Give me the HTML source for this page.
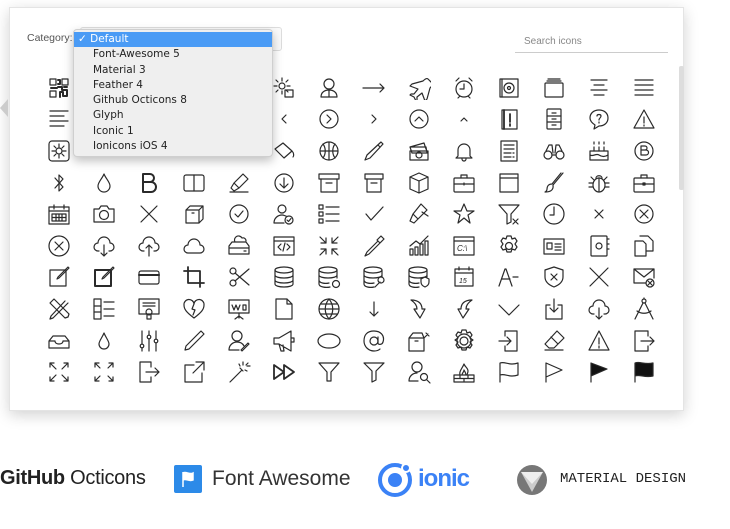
<!DOCTYPE html>
<html><head><meta charset="utf-8"><style>
*{margin:0;padding:0;box-sizing:border-box}
body{width:730px;height:529px;background:#fff;position:relative;overflow:hidden;font-family:"Liberation Sans",sans-serif}
.card{position:absolute;left:9px;top:7px;width:675px;height:404px;background:#fff;border:1px solid #e4e4e4;box-shadow:0 4px 14px rgba(0,0,0,.18)}
.arrow{position:absolute;left:0;top:99px;width:0;height:0;border-top:9px solid transparent;border-bottom:9px solid transparent;border-right:8px solid #ccc}
.cat{position:absolute;left:27px;top:32px;font-size:10.5px;color:#555}
.sel{position:absolute;left:80px;top:27px;width:202px;height:24px;border:1px solid #ddd;border-radius:3px;background:#fafafa}
.search{position:absolute;left:515px;top:36px;width:153px;height:17px;border-bottom:1px solid #ccc;font-size:10px;color:#888;padding-left:9px}
.scroll{position:absolute;left:679px;top:66px;width:5px;height:124px;background:#ddd;border-radius:2px}
.grid{position:absolute;left:36px;top:72px;display:grid;grid-template-columns:repeat(14,45px);grid-template-rows:repeat(10,31.6px)}
.grid i{display:flex;align-items:center;justify-content:center}
.grid svg{width:24px;height:24px;fill:none;stroke:#2a2a2a;stroke-width:1.2;stroke-linecap:round;stroke-linejoin:round}
.dd{position:absolute;left:73px;top:29px;width:200px;height:128px;background:#efefef;border:1px solid #cfcfcf;border-radius:4px;box-shadow:0 4px 10px rgba(0,0,0,.25);font-family:"DejaVu Sans","Liberation Sans",sans-serif;font-size:10.5px;color:#222;padding-top:2px}
.dd div{height:15.3px;line-height:15.3px;padding-left:19px}
.dd .on{background:#4a9bf5;color:#fff;padding-left:4px}
.logos{position:absolute;top:462px;left:0;width:730px;height:36px}
</style></head><body>
<div class="card"></div>
<div class="arrow"></div>
<div class="cat">Category:</div>
<div class="sel"></div>
<div class="search">Search icons</div>
<div class="scroll"></div>
<div class="grid">
<!-- row1 -->
<i><svg viewBox="0 0 24 24"><rect x="3" y="3" width="6" height="6"/><rect x="15" y="3" width="6" height="6"/><rect x="3" y="15" width="6" height="6"/><path d="M11 4h2v4h-2M11 11h4v3h5v6h-4v-4h-3v5M10 12h-6M17 11h3" stroke-width="2"/></svg></i>
<i><svg viewBox="0 0 24 24"><circle cx="12" cy="12" r="8"/></svg></i>
<i><svg viewBox="0 0 24 24"><rect x="4" y="4" width="16" height="16"/></svg></i>
<i><svg viewBox="0 0 24 24"><circle cx="12" cy="12" r="8"/></svg></i>
<i><svg viewBox="0 0 24 24"><rect x="4" y="4" width="16" height="16"/></svg></i>
<i><svg viewBox="0 0 24 24"><circle cx="10" cy="10" r="3"/><path d="M10 2v3M10 15v3M2 10h3M15 10h3M4 4l2 2M14 14l2 2M4 16l2-2M14 6l2-2"/><rect x="13" y="14" width="8" height="7"/></svg></i>
<i><svg viewBox="0 0 24 24"><circle cx="12" cy="8" r="5"/><path d="M4 21c0-5 4-7 8-7s8 2 8 7zM12 14v7"/></svg></i>
<i><svg viewBox="0 0 24 24"><path d="M1 12h21M18 8l4 4-4 4"/></svg></i>
<i><svg viewBox="0 0 24 24"><path d="M21 3c-1-1-3 0-5 2L5 8 3 10l8 3-4 5H4l-1 1 4 2 2 4 1-1v-3l5-4 3 8 2-2 3-11c2-2 3-4 2-5z"/></svg></i>
<i><svg viewBox="0 0 24 24"><circle cx="12" cy="13" r="8"/><path d="M12 8v5h-4M4 5l3-3M20 5l-3-3M6 22l2-2M18 22l-2-2"/></svg></i>
<i><svg viewBox="0 0 24 24"><rect x="3" y="3" width="18" height="18"/><circle cx="12" cy="12" r="5"/><circle cx="12" cy="12" r="1.5"/><path d="M5 3v18"/></svg></i>
<i><svg viewBox="0 0 24 24"><rect x="3" y="7" width="18" height="14" rx="1"/><path d="M5 5h14M6 3h12"/></svg></i>
<i><svg viewBox="0 0 24 24"><path d="M4 4h16M7 9h10M4 14h16M7 19h10"/></svg></i>
<i><svg viewBox="0 0 24 24"><path d="M3 4h18M3 9h18M3 14h18M3 19h18"/></svg></i>
<!-- row2 -->
<i><svg viewBox="0 0 24 24"><path d="M3 4h18M3 9h14M3 14h18M3 19h14"/></svg></i>
<i></i><i></i><i></i><i></i>
<i><svg viewBox="0 0 24 24"><path d="M14 8l-4 4 4 4"/></svg></i>
<i><svg viewBox="0 0 24 24"><circle cx="12" cy="12" r="9"/><path d="M10 8l4 4-4 4"/></svg></i>
<i><svg viewBox="0 0 24 24"><path d="M10 8l4 4-4 4"/></svg></i>
<i><svg viewBox="0 0 24 24"><circle cx="12" cy="12" r="9"/><path d="M8 14l4-4 4 4"/></svg></i>
<i><svg viewBox="0 0 24 24"><path d="M9 14l3-3 3 3"/></svg></i>
<i><svg viewBox="0 0 24 24"><rect x="5" y="3" width="15" height="19"/><path d="M7 3v19M13 7v8M13 17v2" stroke-width="1.8"/></svg></i>
<i><svg viewBox="0 0 24 24"><rect x="5" y="2" width="14" height="20" rx="1"/><path d="M5 9h14M5 15h14M10 6h4M10 12h4M10 18h4"/></svg></i>
<i><svg viewBox="0 0 24 24"><path d="M12 3c5 0 9 3 9 8s-4 8-9 8l-5 3 1-4c-3-2-5-4-5-7 0-5 4-8 9-8z"/><path d="M10 9c0-2 4-2 4 0s-2 2-2 4M12 15v1"/></svg></i>
<i><svg viewBox="0 0 24 24"><path d="M12 3l10 18H2zM12 10v6M12 18v1"/></svg></i>
<!-- row3 -->
<i><svg viewBox="0 0 24 24"><rect x="2" y="2" width="20" height="20" rx="3"/><circle cx="12" cy="12" r="3"/><path d="M12 5v3M12 16v3M5 12h3M16 12h3M7 7l2 2M15 15l2 2M7 17l2-2M15 9l2-2"/></svg></i>
<i></i><i></i><i></i><i></i>
<i><svg viewBox="0 0 24 24"><path d="M3 10l8-6 9 8-8 7zM20 12c2 2 2 5 1 6"/></svg></i>
<i><svg viewBox="0 0 24 24"><circle cx="12" cy="12" r="9"/><path d="M3 12h18M12 3v18M6 5c3 4 3 10 0 14M18 5c-3 4-3 10 0 14"/></svg></i>
<i><svg viewBox="0 0 24 24"><path d="M19 3l2 2L8 19l-5 2 2-5zM16 6l2 2"/></svg></i>
<i><svg viewBox="0 0 24 24"><path d="M3 8l14-4 2 6M3 8l2 6h15l-1-6zM3 12h18v9H3z"/><circle cx="12" cy="16" r="3"/></svg></i>
<i><svg viewBox="0 0 24 24"><path d="M6 17V11a6 6 0 0112 0v6l2 2H4zM10 20a2 2 0 004 0"/></svg></i>
<i><svg viewBox="0 0 24 24"><rect x="4" y="2" width="16" height="20"/><path d="M7 6h10M7 10h10M7 14h7M7 18h7M16 14h1M16 18h1"/></svg></i>
<i><svg viewBox="0 0 24 24"><circle cx="6" cy="16" r="4"/><circle cx="18" cy="16" r="4"/><path d="M4 12l3-6h3l1 8M20 12l-3-6h-3l-1 8M10 16h4"/></svg></i>
<i><svg viewBox="0 0 24 24"><rect x="3" y="12" width="18" height="9"/><path d="M3 16c3 2 6-2 9 0s6 2 9 0M7 8v4M12 8v4M17 8v4M7 3v2M12 3v2M17 3v2"/></svg></i>
<i><svg viewBox="0 0 24 24"><circle cx="12" cy="12" r="9"/><path d="M9 7h4a2 2 0 010 4H9zM9 11h5a2 2 0 010 5H9z"/></svg></i>
<!-- row4 -->
<i><svg viewBox="0 0 24 24"><path d="M8 7l8 9-4 4V4l4 4-8 9"/></svg></i>
<i><svg viewBox="0 0 24 24"><path d="M12 3c-2 5-6 8-6 12a6 6 0 0012 0c0-4-4-7-6-12z"/></svg></i>
<i><svg viewBox="0 0 24 24"><path d="M6 3h7a4 4 0 010 8H6zM6 11h8a5 5 0 010 10H6zM6 3v18" stroke-width="2"/></svg></i>
<i><svg viewBox="0 0 24 24"><rect x="2" y="4" width="20" height="16" rx="2"/><path d="M12 4v16"/></svg></i>
<i><svg viewBox="0 0 24 24"><path d="M16 3l5 5-9 9-5-5zM7 12l-3 5 3 3 5-3M3 21h18"/></svg></i>
<i><svg viewBox="0 0 24 24"><circle cx="12" cy="12" r="9"/><path d="M12 7v10M8 13l4 4 4-4"/></svg></i>
<i><svg viewBox="0 0 24 24"><rect x="2" y="3" width="20" height="5"/><path d="M4 8v13h16V8M9 12h6"/></svg></i>
<i><svg viewBox="0 0 24 24"><rect x="3" y="3" width="18" height="5"/><path d="M5 8v13h14V8M9 12h6"/></svg></i>
<i><svg viewBox="0 0 24 24"><path d="M12 2l9 4v12l-9 4-9-4V6zM3 6l9 4 9-4M12 10v12"/></svg></i>
<i><svg viewBox="0 0 24 24"><rect x="2" y="7" width="20" height="14" rx="1"/><path d="M9 7V4h6v3M2 13h20M12 12v2"/></svg></i>
<i><svg viewBox="0 0 24 24"><rect x="3" y="3" width="18" height="18"/><path d="M3 7h18"/></svg></i>
<i><svg viewBox="0 0 24 24"><path d="M21 2L11 14M19 2l-9 11M10 13c-4 0-5 3-5 5s-2 3-2 3c4 0 9-1 8-7"/></svg></i>
<i><svg viewBox="0 0 24 24"><ellipse cx="12" cy="14" rx="6" ry="7"/><path d="M12 7v14M6 12H2M6 16H2M18 12h4M18 16h4M7 9L4 6M17 9l3-3M9 7c0-3 6-3 6 0"/></svg></i>
<i><svg viewBox="0 0 24 24"><rect x="2" y="7" width="20" height="14" rx="1"/><path d="M9 7V4h6v3M2 13h20M11 12h2v2h-2z"/></svg></i>
<!-- row5 -->
<i><svg viewBox="0 0 24 24"><rect x="2" y="5" width="20" height="17"/><path d="M2 9h20M7 3v4M17 3v4M5 12h14v7H5zM5 15.5h14M9 12v7M12 12v7M15 12v7"/></svg></i>
<i><svg viewBox="0 0 24 24"><path d="M2 7h5l2-3h6l2 3h5v13H2z"/><circle cx="12" cy="13" r="4.5"/></svg></i>
<i><svg viewBox="0 0 24 24"><path d="M4 4l16 16M20 4L4 20"/></svg></i>
<i><svg viewBox="0 0 24 24"><path d="M4 8h13v13H4zM4 8l4-4h13l-4 4M21 4v13l-4 4M10 11h2"/></svg></i>
<i><svg viewBox="0 0 24 24"><circle cx="12" cy="12" r="9"/><path d="M8 12l3 3 5-6"/></svg></i>
<i><svg viewBox="0 0 24 24"><circle cx="10" cy="7" r="4"/><path d="M2 21c0-5 4-8 8-8 2 0 3 1 4 1M2 21h10"/><circle cx="17" cy="18" r="4"/><path d="M15 18l1.5 1.5 2.5-3"/></svg></i>
<i><svg viewBox="0 0 24 24"><rect x="2" y="3" width="4" height="4"/><rect x="2" y="10" width="4" height="4"/><rect x="2" y="17" width="4" height="4"/><path d="M9 5h13M9 12h13M9 19h13"/></svg></i>
<i><svg viewBox="0 0 24 24"><path d="M4 12l5 6L21 5"/></svg></i>
<i><svg viewBox="0 0 24 24"><path d="M14 2l6 6-9 9-5-5zM6 12l-3 7 4 2 4-4M15 10l6 4"/></svg></i>
<i><svg viewBox="0 0 24 24"><path d="M12 2l3 7h7l-6 4 2 8-6-5-6 5 2-8-6-4h7z"/></svg></i>
<i><svg viewBox="0 0 24 24"><path d="M2 3h20l-8 9v8l-4 2V12zM16 17l5 5M21 17l-5 5"/></svg></i>
<i><svg viewBox="0 0 24 24"><circle cx="12" cy="12" r="10"/><path d="M12 5v8h-4"/></svg></i>
<i><svg viewBox="0 0 24 24"><path d="M8 8l8 8M16 8l-8 8"/></svg></i>
<i><svg viewBox="0 0 24 24"><circle cx="12" cy="12" r="9"/><path d="M8 8l8 8M16 8l-8 8"/></svg></i>
<!-- row6 -->
<i><svg viewBox="0 0 24 24"><circle cx="12" cy="12" r="10"/><path d="M8 8l8 8M16 8l-8 8"/></svg></i>
<i><svg viewBox="0 0 24 24"><path d="M7 17H6a4 4 0 010-8 6 6 0 0112 0 4 4 0 010 8h-1M12 11v11M9 19l3 3 3-3"/></svg></i>
<i><svg viewBox="0 0 24 24"><path d="M7 17H6a4 4 0 010-8 6 6 0 0112 0 4 4 0 010 8h-1M12 22V11M9 14l3-3 3 3"/></svg></i>
<i><svg viewBox="0 0 24 24"><path d="M7 19H6a4 4 0 010-8 6 6 0 0112 0 4 4 0 010 8z"/></svg></i>
<i><svg viewBox="0 0 24 24"><path d="M2 12l3-4h14l3 4v8H2zM2 14h20M17 17h2M8 8a4 4 0 017-4 3 3 0 014 3"/></svg></i>
<i><svg viewBox="0 0 24 24"><rect x="2" y="3" width="20" height="18"/><path d="M2 7h20M9 10l-3 3 3 3M15 10l3 3-3 3M13 9l-2 8"/></svg></i>
<i><svg viewBox="0 0 24 24"><path d="M3 3l6 6M9 4v5H4M21 3l-6 6M15 4v5h5M3 21l6-6M9 20v-5H4M21 21l-6-6M15 20v-5h5"/></svg></i>
<i><svg viewBox="0 0 24 24"><path d="M19 2l3 3-4 4-3-3zM16 7L5 18l-2 4 4-2L18 9"/></svg></i>
<i><svg viewBox="0 0 24 24"><path d="M3 21h3v-6H3zM8 21h3v-8H8zM13 21h3V10h-3zM18 21h3V7h-3zM3 12l6-5 4 3 8-8"/></svg></i>
<i><svg viewBox="0 0 24 24"><rect x="2" y="3" width="20" height="18"/><path d="M2 7h20"/><text x="5" y="17" font-size="8" fill="#222" stroke="none" font-family="Liberation Sans">C:\</text></svg></i>
<i><svg viewBox="0 0 24 24"><circle cx="12" cy="12" r="3.5"/><path d="M10 2h4l1 3 3-1 2 3-2 3 2 3-2 3-3-1-1 3h-4l-1-3-3 1-2-3 2-3-2-3 2-3 3 1z"/></svg></i>
<i><svg viewBox="0 0 24 24"><rect x="2" y="5" width="20" height="15"/><rect x="5" y="9" width="5" height="6"/><path d="M13 10h6M13 13h6M13 16h6"/></svg></i>
<i><svg viewBox="0 0 24 24"><rect x="4" y="2" width="16" height="20" rx="1"/><path d="M20 5h2M20 10h2M20 15h2"/><circle cx="12" cy="12" r="3"/></svg></i>
<i><svg viewBox="0 0 24 24"><path d="M3 7h8l3 3v12H3zM8 2h8l5 5v10h-7"/></svg></i>
<!-- row7 -->
<i><svg viewBox="0 0 24 24"><rect x="3" y="5" width="16" height="16"/><path d="M21 2l1 1-10 10-2 1 1-2z"/></svg></i>
<i><svg viewBox="0 0 24 24"><rect x="3" y="5" width="16" height="16" stroke-width="2"/><path d="M21 2l1 1-10 10-2 1 1-2z"/></svg></i>
<i><svg viewBox="0 0 24 24"><rect x="2" y="6" width="20" height="13" rx="2"/><path d="M2 10h20" stroke-width="2"/></svg></i>
<i><svg viewBox="0 0 24 24"><path d="M6 2v16h16M2 6h16v16M6 6h12v12" stroke-width="1.8"/></svg></i>
<i><svg viewBox="0 0 24 24"><circle cx="6" cy="6" r="3"/><circle cx="6" cy="18" r="3"/><path d="M8 8l14 12M8 16L22 4"/></svg></i>
<i><svg viewBox="0 0 24 24"><ellipse cx="12" cy="5" rx="9" ry="3"/><path d="M3 5v14c0 4 18 4 18 0V5M3 10c0 4 18 4 18 0M3 15c0 4 18 4 18 0"/></svg></i>
<i><svg viewBox="0 0 24 24"><ellipse cx="11" cy="5" rx="9" ry="3"/><path d="M2 5v14c0 3 7 4 11 3M20 5v8M2 10c0 4 18 4 18 0M2 15c0 3 6 4 10 3"/><circle cx="19" cy="19" r="3.5"/></svg></i>
<i><svg viewBox="0 0 24 24"><ellipse cx="11" cy="5" rx="9" ry="3"/><path d="M2 5v14c0 3 6 4 10 3M20 5v7M2 10c0 4 18 4 18 0M2 15c0 3 6 4 10 3M13 22l5-5"/><circle cx="19" cy="15" r="3"/></svg></i>
<i><svg viewBox="0 0 24 24"><ellipse cx="11" cy="5" rx="9" ry="3"/><path d="M2 5v14c0 3 6 4 10 3M20 5v7M2 10c0 4 18 4 18 0M2 15c0 3 6 4 10 3M14 14l4-2 4 2v3c0 3-2 4-4 5-2-1-4-2-4-5z"/></svg></i>
<i><svg viewBox="0 0 24 24"><rect x="3" y="4" width="18" height="17"/><path d="M3 8h18M7 2v3M17 2v3"/><text x="7" y="18" font-size="7" fill="#222" stroke="none">15</text></svg></i>
<i><svg viewBox="0 0 24 24"><path d="M2 21l6-17h1l6 17M5 14h8M16 12h5"/></svg></i>
<i><svg viewBox="0 0 24 24"><path d="M12 2l9 3v7c0 5-4 8-9 10-5-2-9-5-9-10V5zM9 9l6 6M15 9l-6 6"/></svg></i>
<i><svg viewBox="0 0 24 24"><path d="M3 3l18 18M21 3L3 21"/></svg></i>
<i><svg viewBox="0 0 24 24"><path d="M14 18H2V4h20v9M2 4l10 8 10-8"/><circle cx="18" cy="18" r="4"/><path d="M16 16l4 4M20 16l-4 4"/></svg></i>
<!-- row8 -->
<i><svg viewBox="0 0 24 24"><path d="M3 6l15 15 3-1 1-3L7 2zM21 6L6 21l-3 1 1-3L18 4"/></svg></i>
<i><svg viewBox="0 0 24 24"><rect x="2" y="2" width="7" height="20"/><path d="M2 9h7M2 15h7M12 5h10M12 12h10M12 19h10"/></svg></i>
<i><svg viewBox="0 0 24 24"><rect x="2" y="2" width="20" height="15"/><path d="M6 6h12M6 9h12"/><circle cx="12" cy="15" r="3"/><path d="M10 17v5h4v-5"/></svg></i>
<i><svg viewBox="0 0 24 24"><path d="M12 21C4 15 2 12 2 8a5 5 0 0110-1 5 5 0 0110 1c0 4-2 7-10 13zM12 7l-2 5 3 1-2 5"/></svg></i>
<i><svg viewBox="0 0 24 24"><rect x="2" y="3" width="20" height="13"/><path d="M12 16v5M8 22l4-3 4 3M5 8l2 5 2-5 2 5 2-5M16 8h3v5h-3z"/></svg></i>
<i><svg viewBox="0 0 24 24"><path d="M4 2h11l5 5v15H4zM15 2v5h5"/></svg></i>
<i><svg viewBox="0 0 24 24"><circle cx="12" cy="12" r="10"/><path d="M2 12h20M12 2c-5 6-5 14 0 20M12 2c5 6 5 14 0 20M4 7h16M4 17h16"/></svg></i>
<i><svg viewBox="0 0 24 24"><path d="M12 5v14M8 15l4 4 4-4"/></svg></i>
<i><svg viewBox="0 0 24 24"><path d="M4 3c8 0 11 4 11 9h3l-5 9-6-9h3c0-4-3-7-6-9z"/></svg></i>
<i><svg viewBox="0 0 24 24"><path d="M20 3c-8 0-11 4-11 9H6l5 9 6-9h-3c0-4 3-7 6-9z"/></svg></i>
<i><svg viewBox="0 0 24 24"><path d="M2 8l10 10L22 8"/></svg></i>
<i><svg viewBox="0 0 24 24"><path d="M8 8H4v14h16V8h-4M12 2v13M8 11l4 4 4-4"/></svg></i>
<i><svg viewBox="0 0 24 24"><path d="M7 17H6a4 4 0 010-8 6 6 0 0112 0 4 4 0 010 8h-1M12 11v11M9 19l3 3 3-3"/></svg></i>
<i><svg viewBox="0 0 24 24"><circle cx="12" cy="4" r="2"/><path d="M11 6L3 22M13 6l8 16M5 14c4 3 10 3 14 0M12 1v1"/></svg></i>
<!-- row9 -->
<i><svg viewBox="0 0 24 24"><path d="M2 12l4-5h12l4 5v7H2zM2 12h6c0 2 2 3 4 3s4-1 4-3h6"/></svg></i>
<i><svg viewBox="0 0 24 24"><path d="M12 4c-2 5-5 8-5 11a5 5 0 0010 0c0-3-3-6-5-11z"/></svg></i>
<i><svg viewBox="0 0 24 24"><path d="M5 2v20M12 2v20M19 2v20"/><circle cx="5" cy="17" r="1.8" fill="#fff"/><circle cx="12" cy="8" r="1.8" fill="#fff"/><circle cx="19" cy="12" r="1.8" fill="#fff"/></svg></i>
<i><svg viewBox="0 0 24 24"><path d="M19 2l3 3L7 20l-4 1 1-4z"/></svg></i>
<i><svg viewBox="0 0 24 24"><circle cx="10" cy="7" r="5"/><path d="M2 21c0-5 4-8 8-8s6 2 7 4M2 21h10M14 21l7-7 1 1-7 7z"/></svg></i>
<i><svg viewBox="0 0 24 24"><path d="M2 9h5l12-7v20L7 15H2zM7 15l2 7h3l-1-6M19 9h3v4h-3"/></svg></i>
<i><svg viewBox="0 0 24 24"><ellipse cx="12" cy="12" rx="11" ry="7"/></svg></i>
<i><svg viewBox="0 0 24 24"><circle cx="12" cy="12" r="4"/><path d="M16 8v6c0 2 4 2 5-1 2-6-2-11-9-11S2 6 2 12s5 10 10 10c3 0 5-1 6-2"/></svg></i>
<i><svg viewBox="0 0 24 24"><path d="M2 9h15v13H2zM2 9l4-5h9l2 5M17 9l4-4M19 4l3 3M8 12h3"/></svg></i>
<i><svg viewBox="0 0 24 24"><circle cx="12" cy="12" r="4"/><circle cx="12" cy="12" r="7"/><path d="M10 1h4l1 3 3-1 2 3-2 3 3 2-3 2 2 3-2 3-3-1-1 3h-4l-1-3-3 1-2-3 2-3-3-2 3-2-2-3 2-3 3 1z"/></svg></i>
<i><svg viewBox="0 0 24 24"><path d="M8 7V2h12v20H8v-5M2 12h12M10 8l4 4-4 4"/></svg></i>
<i><svg viewBox="0 0 24 24"><path d="M15 2l7 7-10 10H7l-4-4zM9 8l7 7M3 21h18"/></svg></i>
<i><svg viewBox="0 0 24 24"><path d="M12 2l10 19H2zM12 9v6M12 17v2"/></svg></i>
<i><svg viewBox="0 0 24 24"><path d="M16 7V2H3v20h13v-5M9 12h13M18 8l4 4-4 4"/></svg></i>
<!-- row10 -->
<i><svg viewBox="0 0 24 24"><path d="M3 3l6 6M3 3h4M3 3v4M21 3l-6 6M21 3h-4M21 3v4M3 21l6-6M3 21h4M3 21v-4M21 21l-6-6M21 21h-4M21 21v-4"/></svg></i>
<i><svg viewBox="0 0 24 24"><path d="M3 3l5 5M3 3h4M3 3v4M21 3l-5 5M21 3h-4M21 3v4M3 21l5-5M3 21h4M3 21v-4M21 21l-5-5M21 21h-4M21 21v-4"/></svg></i>
<i><svg viewBox="0 0 24 24"><path d="M14 7V2H3v20h11v-5M9 12h13M18 8l4 4-4 4"/></svg></i>
<i><svg viewBox="0 0 24 24"><path d="M12 5H3v17h17v-9M14 2h8v8M22 2L11 13"/></svg></i>
<i><svg viewBox="0 0 24 24"><path d="M3 22L15 10M13 8l3 3M16 2v3M20 6h3M21 3l-2 2M12 4l1 2M18 10l2 1"/></svg></i>
<i><svg viewBox="0 0 24 24"><path d="M2 5l10 7-10 7zM12 5l10 7-10 7z" stroke-width="1.8"/></svg></i>
<i><svg viewBox="0 0 24 24"><path d="M2 3h20l-8 9v9h-4v-9z"/></svg></i>
<i><svg viewBox="0 0 24 24"><path d="M2 3h20l-8 8v9l-4 2V11z"/></svg></i>
<i><svg viewBox="0 0 24 24"><circle cx="10" cy="7" r="5"/><path d="M2 21c0-5 4-8 8-8M2 21h9"/><circle cx="17" cy="17" r="3.5"/><path d="M20 20l3 3"/></svg></i>
<i><svg viewBox="0 0 24 24"><path d="M2 15h20v7H2zM2 18.5h20M8 15v3.5M16 15v3.5M12 18.5V22M8 15c-1-4 2-6 4-11 1 3 4 4 4 7 0 2-1 3-1 4M10 15c0-2 2-3 2-5 1 2 2 3 2 5"/></svg></i>
<i><svg viewBox="0 0 24 24"><path d="M3 22V3c5-2 9 3 18 0v12c-9 3-13-2-18 0"/></svg></i>
<i><svg viewBox="0 0 24 24"><path d="M4 22V3l16 7-16 7"/></svg></i>
<i><svg viewBox="0 0 24 24"><path d="M4 22V3l16 6-16 7" fill="#111"/></svg></i>
<i><svg viewBox="0 0 24 24"><path d="M3 22V3c5-2 9 2 18 0v13c-9 2-13-2-18 0" fill="#111"/></svg></i>
</div>
<div class="dd">
<div class="on">✓ Default</div>
<div>Font-Awesome 5</div>
<div>Material 3</div>
<div>Feather 4</div>
<div>Github Octicons 8</div>
<div>Glyph</div>
<div>Iconic 1</div>
<div>Ionicons iOS 4</div>
</div>
<div class="logos">
<div style="position:absolute;left:0;top:5px;font-size:20px;color:#222;letter-spacing:-.3px"><b>GitHub</b> Octicons</div>
<div style="position:absolute;left:174px;top:3px;width:28px;height:28px;background:#2c8ae8;border-radius:2px"><svg width="28" height="28" viewBox="0 0 28 28"><path d="M9 7v15M9 8c3-2 6 2 10 0v7c-4 2-7-2-10 0" fill="#fff" stroke="#fff" stroke-width="1.5"/></svg></div>
<div style="position:absolute;left:212px;top:5px;font-size:21px;color:#333">Font Awesome</div>
<svg style="position:absolute;left:377px;top:0" width="36" height="36" viewBox="0 0 36 36"><circle cx="18" cy="18" r="15" fill="none" stroke="#3b82f6" stroke-width="4"/><circle cx="18" cy="18" r="7" fill="#3b82f6"/><circle cx="29" cy="6" r="4" fill="#3b82f6" stroke="#fff" stroke-width="2"/></svg>
<div style="position:absolute;left:418px;top:3px;font-size:24px;color:#3b82f6;font-weight:bold;letter-spacing:-1px">ionic</div>
<svg style="position:absolute;left:516px;top:2px" width="32" height="32" viewBox="0 0 32 32"><circle cx="16" cy="16" r="15" fill="#777"/><path d="M5 8h22L16 28z" fill="#ccc"/><path d="M5 8h22L16 20z" fill="#eee"/></svg>
<div style="position:absolute;left:560px;top:9px;font-family:'Liberation Mono',monospace;font-size:14px;color:#222">MATERIAL DESIGN</div>
</div>
</body></html>
